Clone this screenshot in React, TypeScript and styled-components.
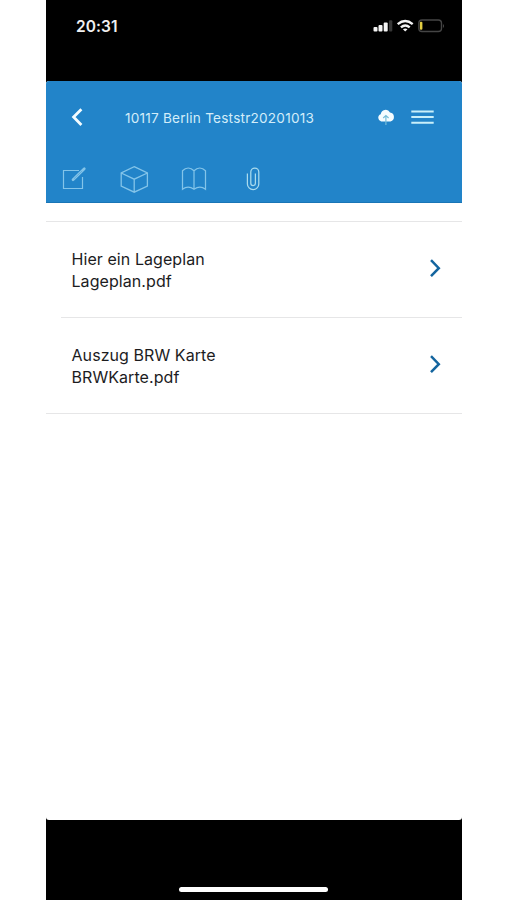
import React from "react";
import styled, { createGlobalStyle } from "styled-components";

const GlobalStyle = createGlobalStyle`
  * { box-sizing: border-box; }
  body { margin: 0; background: #fff; font-family: Inter, Roboto, sans-serif; }
`;

const Phone = styled.main`
  width: 416px;
  height: 900px;
  margin-left: 46px;
  background: #000;
  display: flex;
  flex-direction: column;
  overflow: hidden;
`;

const StatusBar = styled.div`
  height: 81px;
  flex: none;
  display: flex;
  align-items: flex-start;
  justify-content: space-between;
  padding: 16px 17px 0 30px;
`;

const Time = styled.time`
  color: #f0f0f0;
  font-size: 15.5px;
  line-height: 20px;
  font-weight: 600;
  margin-top: 1px;
  letter-spacing: 0.1px;
`;

const Screen = styled.section`
  height: 738.5px;
  flex: none;
  display: flex;
  flex-direction: column;
  background: #fff;
  border-radius: 3px;
  overflow: hidden;
`;

const Header = styled.header`
  height: 122px;
  flex: none;
  background: #2284c9;
  border-bottom: 1px solid #1975b6;
`;

const TitleBar = styled.div`
  height: 71px;
  display: flex;
  align-items: center;
  padding: 0 28px 0 24px;
`;

const IconButton = styled.button<{ $width: number; $gap?: number }>`
  width: ${(p) => p.$width}px;
  height: 24px;
  margin: 0 0 0 ${(p) => p.$gap ?? 0}px;
  padding: 0;
  border: 0;
  background: none;
  display: flex;
  flex: none;
`;

const Title = styled.h1`
  margin: 3px 0 0 41px;
  flex: 1;
  color: #d3edf9;
  font-size: 13.6px;
  line-height: 20px;
  font-weight: 400;
  white-space: nowrap;
  letter-spacing: 0.22px;
`;

const Tabs = styled.nav`
  display: flex;
  padding: 12px 0 0 14px;
  gap: 30px;
`;

const List = styled.ul`
  list-style: none;
  margin: 18px 0 0;
  padding: 0;
  border-top: 1px solid #e6e6e7;
  border-bottom: 1px solid #e6e6e7;
`;

const Row = styled.li<{ $divided?: boolean }>`
  height: ${(p) => (p.$divided ? 96 : 95)}px;
  margin-left: 15px;
  padding: 0 20px 3px 10.5px;
  display: flex;
  align-items: center;
  justify-content: space-between;
  border-bottom: ${(p) => (p.$divided ? "1px solid #e6e6e7" : "0")};
`;

const Label = styled.div`
  color: #1c1c1e;
  font-size: 16px;
  line-height: 22px;
  margin-top: 3px;
`;

const Line = styled.div`
  letter-spacing: 0.07px;
  white-space: nowrap;
`;

const HomeArea = styled.footer`
  flex: 1;
  display: flex;
  align-items: flex-end;
  justify-content: center;
  padding: 0 1px 8px 0;
`;

const HomeIndicator = styled.div`
  width: 149px;
  height: 5px;
  border-radius: 3px;
  background: #fff;
`;

const StatusIcons = () => (
  <svg width="72" height="20" viewBox="0 0 72 20" aria-label="Signal, WLAN, Akku">
    <g fill="#f4f4f4">
      <rect x="0.5" y="11" width="4" height="4.5" rx="1" />
      <rect x="5.5" y="9" width="4" height="6.5" rx="1" />
      <rect x="10.7" y="6.5" width="4" height="9" rx="1" />
      <rect x="16" y="4.2" width="3.3" height="11.3" rx="1" fill="#363636" />
    </g>
    <g fill="none" stroke="#f4f4f4" strokeWidth="2.4">
      <path d="M24.7 8.1q7.5-6.2 15 0" />
      <path d="M27.9 11.3q4.4-3.8 8.8 0" />
    </g>
    <path d="M29.9 13.3q2.3-1.7 4.6 0l-2.3 2.3z" fill="#f4f4f4" />
    <rect x="45.8" y="4" width="22.7" height="11.5" rx="3.2" fill="none" stroke="#454545" strokeWidth="1.4" />
    <rect x="46.9" y="5.7" width="2.5" height="8" rx="1" fill="#e2cd42" />
    <path d="M70 8v4q2-2 0-4" fill="#4b4b4b" />
  </svg>
);

const BackIcon = () => (
  <svg width="14" height="24" viewBox="0 0 14 24">
    <path d="M11.4 4.2 3.6 12l7.8 8" fill="none" stroke="#f3fcff" strokeWidth="2.8" />
  </svg>
);

const CloudIcon = () => (
  <svg width="18" height="24" viewBox="0 0 18 24">
    <path d="M4.2 16.4a3.7 3.7 0 0 1-.5-7.1A5 5 0 0 1 13 7.4a4.6 4.6 0 0 1 .5 9z" fill="#f5fcff" />
    <path d="M8.9 20v-8.5M6.2 13l2.7-2.5 2.7 2.5" fill="none" stroke="#76bdd8" strokeWidth="1.2" />
  </svg>
);

const MenuIcon = () => (
  <svg width="23" height="24" viewBox="0 0 23 24">
    <path d="M.3 6.5h22.4M.3 12.1h22.4M.3 17.7h22.4" stroke="#c9effa" strokeWidth="2" />
  </svg>
);

const tabs = [
  {
    name: "Bearbeiten",
    color: "#83c4e9",
    drawing: (
      <>
        <path d="M19 6.5H3.5v18h19V13" strokeWidth="1.2" />
        <path d="m13 15.8 11.3-11" strokeWidth="2.7" strokeLinecap="round" />
        <path d="m14 14.8 8-7.8" stroke="#4b9dd3" strokeWidth=".6" />
      </>
    ),
  },
  {
    name: "Objekt",
    color: "#83c4e9",
    drawing: (
      <path d="M14.2 2.7 27.4 9v13l-13.2 6.2L1.2 22V9zM1.2 9l13 6.2L27.4 9M14.2 15.2v13" strokeWidth="1.3" />
    ),
  },
  {
    name: "Katalog",
    color: "#83c4e9",
    drawing: (
      <path d="M14 6.7C10.5 3.2 6 3.2 2.5 6.7v18.6q5.5-4.2 11.5 0 6-4.2 11.5 0V6.7C22 3.2 17.5 3.2 14 6.7zv18.6" strokeWidth="1.25" />
    ),
  },
  {
    name: "Anhänge",
    color: "#aadbed",
    drawing: (
      <path d="M15.4 9.4v9.8a2.3 2.3 0 0 1-4.6 0V8.1a4 4 0 0 1 8 0" strokeWidth="1.25" />
    ),
    outer: true,
  },
];

const ChevronIcon = () => (
  <svg width="14" height="22" viewBox="0 0 14 22">
    <path d="m3 3.2 7.8 8L3 19.2" fill="none" stroke="#14659f" strokeWidth="2.5" />
  </svg>
);

const documents = [
  { title: "Hier ein Lageplan", file: "Lageplan.pdf" },
  { title: "Auszug BRW Karte", file: "BRWKarte.pdf" },
];

export default function App() {
  return (
    <>
      <GlobalStyle />
      <Phone>
        <StatusBar>
          <Time>20:31</Time>
          <StatusIcons />
        </StatusBar>
        <Screen>
          <Header>
            <TitleBar>
              <IconButton $width={14} aria-label="Zurück"><BackIcon /></IconButton>
              <Title>10117 Berlin Teststr20201013</Title>
              <IconButton $width={18} aria-label="Hochladen"><CloudIcon /></IconButton>
              <IconButton $width={23} $gap={16} aria-label="Menü"><MenuIcon /></IconButton>
            </TitleBar>
            <Tabs>
              {tabs.map((tab) => (
                <svg key={tab.name} width="30" height="30" viewBox="0 0 30 30" fill="none" stroke={tab.color} role="img" aria-label={tab.name}>
                  {tab.drawing}
                  {tab.outer && <path d="M18.8 8.1v11.8a5.7 5.7 0 0 1-11.4 0V9.4" strokeWidth="1.25" />}
                </svg>
              ))}
            </Tabs>
          </Header>
          <List>
            {documents.map((doc, index) => (
              <Row key={doc.file} $divided={index < documents.length - 1}>
                <Label>
                  <Line>{doc.title}</Line>
                  <Line>{doc.file}</Line>
                </Label>
                <ChevronIcon />
              </Row>
            ))}
          </List>
        </Screen>
        <HomeArea><HomeIndicator /></HomeArea>
      </Phone>
    </>
  );
}
